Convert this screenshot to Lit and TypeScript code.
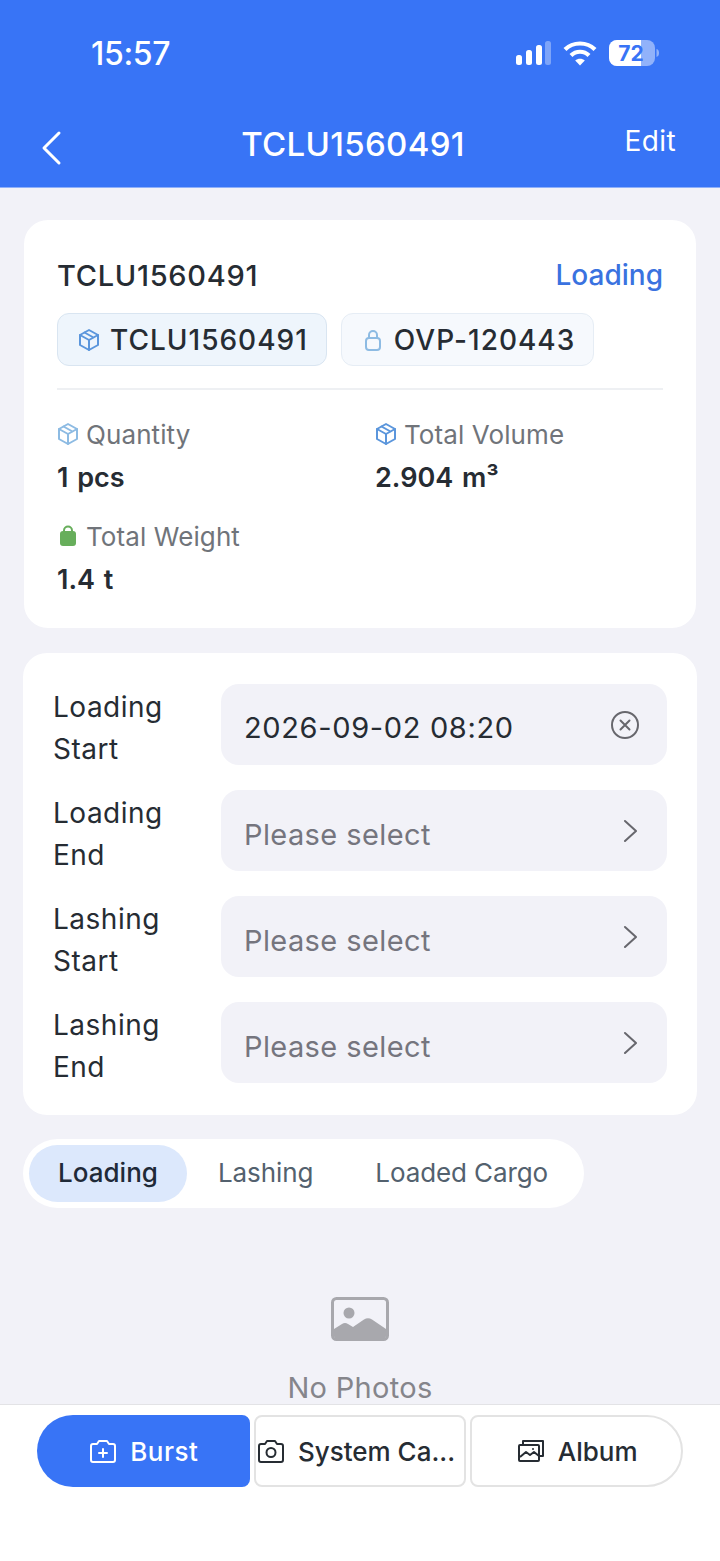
import { LitElement, html, css } from "lit";
import { customElement } from "lit/decorators.js";

const box = (c: string, w = 2) => html`<svg class="ic" viewBox="0 0 22 24" fill="none" stroke=${c} stroke-width=${w} stroke-linejoin="round" stroke-linecap="round"><path d="M11 2 20 7v10l-9 5-9-5V7z"/><path d="M2 7l9 5 9-5M11 12v10M6.5 4.5 15.5 9.5"/></svg>`;

const fields = [
  ["Loading", "Start", "2026-09-02 08:20", true],
  ["Loading", "End", "Please select", false],
  ["Lashing", "Start", "Please select", false],
  ["Lashing", "End", "Please select", false],
] as const;

@customElement("app-root")
export class AppRoot extends LitElement {
  static styles = css`
    :host { display: block; width: 720px; height: 1561px; font-family: Inter, "Liberation Sans", sans-serif; background: #f2f2f8; color: #262c33; overflow: hidden; }
    .page { height: 1561px; display: flex; flex-direction: column; }
    header { height: 188px; flex: none; background: #3874f6; color: #fff; box-sizing: border-box; border-bottom: 1px solid #8fb0fa; }
    .status { height: 106px; display: flex; align-items: center; justify-content: space-between; padding: 0 61px 0 91px; box-sizing: border-box; }
    .time { font-size: 32px; font-weight: 500; letter-spacing: -0.3px; }
    .sicons { display: flex; align-items: center; gap: 12px; }
    .nav { height: 76px; display: grid; grid-template-columns: 1fr auto 1fr; align-items: center; padding: 0 44px 0 40px; }
    .back { width: 24px; height: 36px; display: block; margin-top: 8px; }
    .title { font-size: 33px; font-weight: 500; letter-spacing: .3px; transform: translateX(-5px); }
    .edit { font-size: 28px; letter-spacing: .4px; justify-self: end; margin-top: -6px; }
    main { flex: 1; min-height: 0; overflow: hidden; display: flex; flex-direction: column; padding: 32px 23px 0; box-sizing: border-box; }
    .card { background: #fff; border-radius: 24px; flex: none; }
    .info { margin: 0 1px; padding: 35px 33px 0; height: 408px; box-sizing: border-box; }
    .top { display: flex; justify-content: space-between; align-items: center; height: 40px; }
    .ctitle { font-size: 29px; font-weight: 500; letter-spacing: .7px; }
    .state { font-size: 28px; font-weight: 500; color: #3a72e0; }
    .chips { display: flex; gap: 14px; margin-top: 18px; padding-bottom: 22px; border-bottom: 2px solid #eef0f3; }
    .chip { height: 53px; box-sizing: border-box; border-radius: 12px; display: flex; align-items: center; gap: 10px; padding: 0 18px 0 20px; font-size: 28px; font-weight: 500; letter-spacing: 1px; border: 1px solid #e6edf5; background: #f6f9fd; }
    .chip.on { background: #eef5fc; border-color: #d9e5f1; }
    .ic { width: 22px; height: 24px; flex: none; display: block; }
    .stats { display: grid; grid-template-columns: 318px 1fr; row-gap: 18px; margin-top: 24px; }
    .lab { display: flex; align-items: center; gap: 7px; font-size: 26px; color: #70747a; height: 40px; letter-spacing: .1px; }
    .val { font-size: 27px; font-weight: 600; word-spacing: 2px; margin-top: 4px; height: 40px; line-height: 40px; }
    .form { margin-top: 25px; padding: 31px 30px 32px; display: flex; flex-direction: column; gap: 25px; }
    .row { display: grid; grid-template-columns: 168px 1fr; grid-template-rows: 81px; align-items: start; }
    .rl { font-size: 28px; line-height: 42px; letter-spacing: .5px; padding-top: 2px; }
    .field { height: 81px; border-radius: 18px; background: #f2f2f8; display: flex; align-items: center; justify-content: space-between; padding: 0 28px 0 23px; box-sizing: border-box; font-size: 29px; letter-spacing: .65px; }
    .field.ph { color: #75757e; padding-right: 30px; letter-spacing: .4px; }
    .field span { margin-top: 7px; }
    .field.val2 span { margin-top: 5px; }
    .tabs { margin-top: 24px; width: 561px; height: 69px; flex: none; box-sizing: border-box; background: #fff; border-radius: 35px; padding: 6px; display: flex; align-items: stretch; }
    .tab { display: flex; flex: none; align-items: center; white-space: nowrap; font-size: 26px; letter-spacing: -.1px; color: #53616e; padding: 0 31px 2px; }
    .tab.on { background: #dce8fc; color: #1f2a38; font-weight: 500; letter-spacing: 0; border-radius: 29px; width: 158px; padding: 0 0 2px; justify-content: center; box-sizing: border-box; }
    .empty { display: flex; flex-direction: column; align-items: center; margin-top: 89px; color: #85858b; font-size: 29px; letter-spacing: .3px; gap: 29px; }
    .bar { flex: none; height: 157px; background: #fff; border-top: 1px solid #e3e3e6; box-sizing: border-box; padding: 10px 37px 0; display: flex; gap: 4px; }
    .btn { width: 213px; height: 72px; box-sizing: border-box; border: 2px solid #e3e3e3; border-radius: 8px; background: #fff; display: flex; align-items: center; justify-content: center; gap: 14px; font-size: 26px; font-weight: 500; }
    .btn.p { background: #3874f6; border: 0; color: #fff; border-radius: 36px 8px 8px 36px; letter-spacing: .5px; padding-left: 2px; }
    .btn.m { padding-right: 7px; }
    .btn.l { border-radius: 8px 36px 36px 8px; padding-left: 2px; }
  `;

  render() {
    return html`<div class="page">
      <header>
        <div class="status">
          <span class="time">15:57</span>
          <div class="sicons">
            <svg width="36" height="26" viewBox="0 0 36 26"><rect x="1" y="15" width="6" height="10" rx="2.5" fill="#fff"/><rect x="11" y="10" width="6" height="15" rx="2.5" fill="#fff"/><rect x="21" y="5" width="6" height="20" rx="2.5" fill="#fff"/><rect x="30" y="1" width="6" height="24" rx="2.5" fill="#fff" opacity=".35"/></svg>
            <svg width="34" height="26" viewBox="0 0 34 26" fill="none" stroke="#fff" stroke-width="4.2"><path d="M2 9.5C10 1.5 24 1.5 32 9.5"/><path d="M8 15.5C13 10.5 21 10.5 26 15.5"/><path d="M17 25.5 12.2 20.5C14.8 18 19.2 18 21.8 20.5Z" fill="#fff" stroke="none"/></svg>
            <svg width="50" height="26" viewBox="0 0 50 26"><rect width="46" height="26" rx="8" fill="#fff" opacity=".45"/><path d="M8 0H32V26H8A8 8 0 0 1 0 18V8A8 8 0 0 1 8 0Z" fill="#fff"/><path d="M47.5 9c2 .6 2.5 2.2 2.5 4s-.5 3.400-2.500 4z" fill="#fff" opacity=".45"/><text x="22" y="20.500" text-anchor="middle" font-size="21" font-weight="700" fill="#3874f6" font-family="Inter">72</text></svg>
          </div>
        </div>
        <div class="nav">
          <svg class="back" viewBox="0 0 24 36" fill="none" stroke="#fff" stroke-width="3" stroke-linecap="round" stroke-linejoin="round"><path d="M19 3 4 18l15 15"/></svg>
          <span class="title">TCLU1560491</span>
          <span class="edit">Edit</span>
        </div>
      </header>
      <main>
        <section class="card info">
          <div class="top"><span class="ctitle">TCLU1560491</span><span class="state">Loading</span></div>
          <div class="chips">
            <div class="chip on">${box("#5b96dc")}TCLU1560491</div>
            <div class="chip"><svg class="ic" viewBox="0 0 22 24" fill="none" stroke="#8dbbe3" stroke-width="2"><rect x="4" y="10" width="14" height="12" rx="3"/><path d="M7 10V7a4 4 0 0 1 8 0v3"/></svg>OVP-120443</div>
          </div>
          <div class="stats">
            <div><div class="lab">${box("#8dbbe3")}Quantity</div><div class="val">1 pcs</div></div>
            <div><div class="lab">${box("#5b96dc")}Total Volume</div><div class="val">2.904 m³</div></div>
            <div><div class="lab"><svg class="ic" viewBox="0 0 22 24"><path d="M7 8V6.500a4 4 0 0 1 8 0V8" fill="none" stroke="#67ae5b" stroke-width="2"/><rect x="3" y="7" width="16" height="15" rx="3" fill="#67ae5b"/></svg>Total Weight</div><div class="val">1.4 t</div></div>
          </div>
        </section>
        <section class="card form">
          ${fields.map(([a, b, v, filled]) => html`<div class="row">
            <div class="rl">${a}<br />${b}</div>
            <div class="field ${filled ? "val2" : "ph"}"><span>${v}</span>
              ${filled
                ? html`<svg width="28" height="28" viewBox="0 0 28 28" fill="none" stroke="#67676d" stroke-width="2"><circle cx="14" cy="14" r="13"/><path d="M9.500 9.500l9 9M18.500 9.500l-9 9" stroke-linecap="round"/></svg>`
                : html`<svg width="14" height="24" viewBox="0 0 14 24" fill="none" stroke="#67676d" stroke-width="2" stroke-linecap="round" stroke-linejoin="round"><path d="M2 2l11 10L2 22"/></svg>`}
            </div>
          </div>`)}
        </section>
        <nav class="tabs"><div class="tab on">Loading</div><div class="tab">Lashing</div><div class="tab">Loaded Cargo</div></nav>
        <div class="empty">
          <svg width="58" height="44" viewBox="0 0 58 44"><rect x="1.500" y="1.500" width="55" height="41" rx="4" fill="none" stroke="#a8a8ad" stroke-width="3"/><circle cx="18" cy="16" r="5.500" fill="#a8a8ad"/><path d="M3 32 11 27Q14 25 17 27L22 30 33 22.500Q37 20 41 22.500L55 32V39a3 3 0 0 1-3 3H6a3 3 0 0 1-3-3z" fill="#a8a8ad"/></svg>
          <span>No Photos</span>
        </div>
      </main>
      <footer class="bar">
        <div class="btn p"><svg width="26" height="24" viewBox="0 0 26 24" fill="none" stroke="#fff" stroke-width="2" stroke-linejoin="round" stroke-linecap="round"><path d="M3 5h4l2-3h8l2 3h4a2 2 0 0 1 2 2v14a2 2 0 0 1-2 2H3a2 2 0 0 1-2-2V7a2 2 0 0 1 2-2z"/><path d="M13 10v8M9 14h8"/></svg>Burst</div>
        <div class="btn m"><svg width="26" height="24" viewBox="0 0 26 24" fill="none" stroke="#262c33" stroke-width="2" stroke-linejoin="round"><path d="M3 5h4l2-3h8l2 3h4a2 2 0 0 1 2 2v14a2 2 0 0 1-2 2H3a2 2 0 0 1-2-2V7a2 2 0 0 1 2-2z"/><circle cx="13" cy="13.500" r="4.500"/></svg>System Ca...</div>
        <div class="btn l"><svg width="26" height="24" viewBox="0 0 26 24" fill="none" stroke="#262c33" stroke-width="2" stroke-linejoin="round"><path d="M5 6V2h20v15h-4"/><rect x="1" y="6" width="20" height="16" rx="1"/><path d="M2 18l6-5 4 3 4-3 5 4"/><circle cx="15" cy="10" r="1" fill="#262c33" stroke="none"/></svg>Album</div>
      </footer>
    </div>`;
  }
}
